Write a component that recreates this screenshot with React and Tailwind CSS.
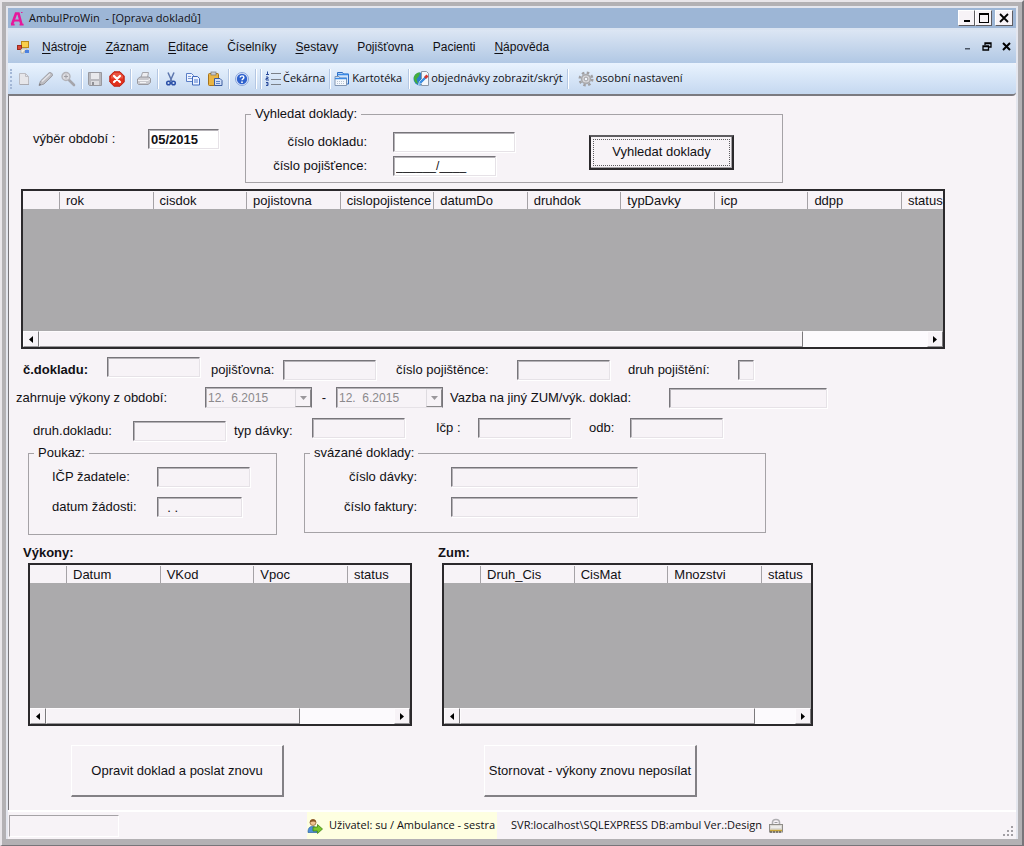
import { useState } from 'react';

const menuItems = [
  { key: 'N', rest: 'ástroje' },
  { key: 'Z', rest: 'áznam' },
  { key: 'E', rest: 'ditace' },
  { key: '', rest: 'Číselníky' },
  { key: 'S', rest: 'estavy' },
  { key: '', rest: 'Pojišťovna' },
  { key: '', rest: 'Pacienti' },
  { key: 'N', rest: 'ápověda' },
];

/* ---------- ICONS ---------- */

function LogoIcon() {
  return (
    <svg width="15" height="15" viewBox="0 0 15 15" fill="none" stroke="#e6179b">
      <path d="M2 13.5 6 2.5h2.5l3 11" strokeWidth="2.6" />
      <path d="M4 9.5h6" strokeWidth="2" />
      <path d="M1 13.6h3.6M9.6 13.6h4" strokeWidth="1.8" />
      <path d="M11 1.5h1.5" strokeWidth="1" />
    </svg>
  );
}

function FormIcon() {
  return (
    <svg width="14" height="14" viewBox="0 0 14 14">
      <rect x="5.5" y="1.5" width="7" height="6" fill="#f9cf4a" stroke="#b98a1b" />
      <rect x="1.5" y="5.5" width="4" height="4" fill="#d8483a" stroke="#9c2a1f" />
      <path d="M5 9h6v2H8v2H5z" fill="#f3efe4" stroke="#a89f8c" strokeWidth=".6" />
      <rect x="9" y="10" width="4" height="3" fill="#4a80e0" />
    </svg>
  );
}

function NewIcon() {
  return (
    <svg width="16" height="16" viewBox="0 0 16 16">
      <path d="M3.5 2.5h6l3 3v8h-9z" fill="#e6e6ea" stroke="#bcbcc2" />
      <path d="M9.5 2.5v3h3" fill="none" stroke="#bcbcc2" />
      <path d="M4 13.5h9" stroke="#a9a9b0" />
    </svg>
  );
}

function PenIcon() {
  return (
    <svg width="16" height="16" viewBox="0 0 16 16">
      <path d="M1 14.5 2.5 10 11 1.8c1.5-1 4.300 1 3.300 3L6 13z" fill="#bdbdc2" stroke="#9b9ba1" />
      <path d="M4 10.5 12 3" stroke="#e4e4e8" strokeWidth="1.5" />
      <path d="m1 14.5.8-2 1.300 1.300z" fill="#6d6d73" />
    </svg>
  );
}

function FindIcon() {
  return (
    <svg width="16" height="16" viewBox="0 0 16 16">
      <path d="m9 9 5 5" stroke="#a5a5ab" strokeWidth="2.6" strokeLinecap="round" />
      <circle cx="6" cy="5.5" r="4" fill="#dcdce1" stroke="#b3b3b9" strokeWidth="1.4" />
      <path d="M4 5.5h4M6 3.5v4" stroke="#a0a0a6" />
    </svg>
  );
}

function SaveIcon() {
  return (
    <svg width="16" height="16" viewBox="0 0 16 16">
      <path d="M1.5 1.5h13v13h-12l-1-1z" fill="#b9b9be" stroke="#98989e" />
      <rect x="4" y="2" width="8" height="6" fill="#e9e9ec" />
      <rect x="4" y="10" width="8" height="4" fill="#dcdce0" />
      <rect x="5" y="11" width="2" height="3" fill="#8f8f95" />
    </svg>
  );
}

function CancelIcon() {
  return (
    <svg width="16" height="16" viewBox="0 0 16 16">
      <path d="M5 .8h6L15.2 5v6L11 15.2H5L.8 11V5z" fill="#e2301c" stroke="#b81f10" />
      <path d="M5.3 1.7h5.4L14 5v2.5H2V5z" fill="#f0705c" opacity=".6" />
      <path d="m5 5 6 6m0-6-6 6" stroke="#fff" strokeWidth="2.2" strokeLinecap="round" />
    </svg>
  );
}

function PrintIcon() {
  return (
    <svg width="16" height="16" viewBox="0 0 16 16">
      <path d="M5 6.5 6.5 1.5h6L11.5 6.5z" fill="#ededf0" stroke="#a5a5ab" />
      <path d="M1.5 8 4 6h9l1.5 1.5v4L12 13.5H2.5l-1-1z" fill="#c9c9ce" stroke="#9a9aa0" />
      <path d="M2 9.5h10l2-1.5M4 11.5h6" stroke="#f3f3f5" fill="none" />
    </svg>
  );
}

function CutIcon() {
  return (
    <svg width="16" height="16" viewBox="0 0 16 16" fill="none">
      <path d="m5 1.5 4 9M11 1.5l-4 9" stroke="#5c76ad" strokeWidth="1.5" />
      <circle cx="5.5" cy="12" r="1.8" stroke="#2b50a8" strokeWidth="1.5" />
      <circle cx="10.5" cy="12" r="1.8" stroke="#2b50a8" strokeWidth="1.5" />
    </svg>
  );
}

function CopyIcon() {
  return (
    <svg width="16" height="16" viewBox="0 0 16 16">
      <path d="M1.5 2.5h5l2 2v6h-7z" fill="#eef4ff" stroke="#5b7fc7" />
      <path d="M3 5.5h3M3 7.5h4" stroke="#7f9cd6" />
      <path d="M7.5 5.5h5l2 2v6.5h-7z" fill="#eef4ff" stroke="#3f68ba" />
      <path d="M9 9h4M9 11h4" stroke="#4c79cf" />
    </svg>
  );
}

function PasteIcon() {
  return (
    <svg width="16" height="16" viewBox="0 0 16 16">
      <rect x="1.5" y="2.5" width="10" height="12" rx="1" fill="#eab544" stroke="#a8731a" />
      <rect x="4" y="1" width="5" height="3" fill="#c8cbd2" stroke="#777" strokeWidth=".7" />
      <path d="M7.5 7.5h5.500l2 2v5h-7.500z" fill="#cfdef8" stroke="#3c5d9e" />
      <path d="M9 10.5h4M9 12.5h4" stroke="#5d84c9" />
    </svg>
  );
}

function HelpIcon() {
  return (
    <svg width="16" height="16" viewBox="0 0 16 16">
      <circle cx="8" cy="8" r="6.5" fill="#dfe8fa" stroke="#8aa5da" />
      <circle cx="8" cy="8" r="5.2" fill="#2f62cd" />
      <path d="M6.2 6.6c0-2.300 3.700-2.200 3.700 0C9.900 7.900 8 7.800 8 9.300" fill="none" stroke="#fff" strokeWidth="1.4" />
      <circle cx="8" cy="11.2" r=".9" fill="#fff" />
    </svg>
  );
}

function ListIcon() {
  return (
    <svg width="16" height="16" viewBox="0 0 16 16" fill="none">
      <path d="M2.5 .5v3M1 3.5h3M1 6h2v1.500H1V9h3M1 11.5h2v3H1M1.5 13h1.500" stroke="#2b4a9a" />
      <path d="M6 2.5h10M6 8.5h10M6 13.5h10" stroke="#7b8088" />
    </svg>
  );
}

function FoldersIcon() {
  return (
    <svg width="16" height="16" viewBox="0 0 16 16">
      <path d="M3.5 5.5v-4h5l1 1.500h5v10h-3" fill="#cfe3fb" stroke="#2f6cc0" />
      <path d="M1 14.5v-9h4l1 1.500h6.500v7.500z" fill="#f4f8fd" stroke="#8296b2" />
      <path d="M1 7.500h12M3.500 3.500h11" stroke="#3b8ae6" strokeWidth="1.5" />
      <path d="M3 10.5h8M3 12.5h8" stroke="#b9c4d2" strokeDasharray="1 1" />
    </svg>
  );
}

function OrdersIcon() {
  return (
    <svg width="16" height="16" viewBox="0 0 16 16">
      <circle cx="7" cy="8" r="6.5" fill="#2a7fc9" />
      <path d="M1 6c1-3.500 4-5 6-4.500L6 5 3.500 8 5 13C2 12 .5 9 1 6z" fill="#43ad3c" />
      <path d="M8.5.5h5l2 2v12h-7z" fill="#f4f7fb" stroke="#8b98a8" />
      <path d="m5.5 13.5 1-3L13 4l2 2-6.500 6.500z" fill="#3f8fe0" stroke="#f4f7fb" strokeWidth=".7" />
      <path d="m11 6 2.500-2.500 2 2L13 8z" fill="#d9342b" />
    </svg>
  );
}

function GearIcon() {
  return (
    <svg width="16" height="16" viewBox="0 0 16 16" fill="none">
      <circle cx="8" cy="8" r="6.3" stroke="#a09fa2" strokeWidth="2.4" strokeDasharray="2.5 2.45" />
      <circle cx="8" cy="8" r="4.4" fill="#d9d9dc" stroke="#aaaaad" strokeWidth="1.6" />
      <circle cx="8" cy="8" r="1.9" fill="#f1f5fb" stroke="#a0a0a4" />
    </svg>
  );
}

function UserIcon() {
  return (
    <svg width="16" height="16" viewBox="0 0 16 16">
      <path d="M1 14.5c0-5 2-6 4.500-6s4.500 1 4.500 6z" fill="#4f8fd8" stroke="#2d62a5" strokeWidth=".7" />
      <circle cx="6" cy="4.5" r="3" fill="#f1c493" stroke="#8a5a26" strokeWidth=".7" />
      <path d="M2.8 4.5C2.8 0 9.2 0 9.2 4.5 7.5 3 5 3 2.8 4.5z" fill="#8a5523" />
      <path d="M6 9h4.500V6.500L15.500 11l-5 4.500V13H6z" fill="#7ac62c" stroke="#3f8413" strokeWidth=".8" />
    </svg>
  );
}

function LockIcon() {
  return (
    <svg width="16" height="16" viewBox="0 0 16 16">
      <path d="M4.500 7V4.500c0-4 7-4 7 0V7" fill="none" stroke="#b0afb2" strokeWidth="1.6" />
      <path d="M6.500 4.500h3" stroke="#9d9da0" />
      <rect x="1.5" y="6.5" width="13" height="7.5" fill="#dcdad6" stroke="#8f8d88" />
      <path d="M3 9h10" stroke="#fff" />
      <path d="M2 12.5h12" stroke="#c9a63a" strokeWidth="1.5" />
      <path d="M2 14h12" stroke="#3f3b33" strokeDasharray="2 1" />
    </svg>
  );
}

/* ---------- SMALL PARTS ---------- */

function Separator() {
  return <div className="mx-[2px] h-5 w-px shrink-0 bg-[#b4c7e3] shadow-[1px_0_0_#ffffff]" />;
}

function ToolButton({ label, children }) {
  return (
    <button aria-label={label} className="flex h-6 w-[22px] shrink-0 items-center justify-center">
      {children}
    </button>
  );
}

function TextToolButton({ text, className = '', children }) {
  return (
    <button className={`flex h-6 shrink-0 items-center gap-[2px] whitespace-nowrap px-[2px] ${className}`}>
      {children}
      {text}
    </button>
  );
}

function TextBox({ id, className, disabled = true, value = '' }) {
  const [text, setText] = useState(value);
  const background = disabled ? 'bg-[#f7f3f7]' : 'bg-white';
  return (
    <input
      id={id}
      type="text"
      value={text}
      disabled={disabled}
      onChange={(e) => setText(e.target.value)}
      className={`h-5 shrink-0 rounded-none border border-t-[#77757a] border-r-[#e6e2e7] border-b-[#e6e2e7] border-l-[#77757a] px-[2px] leading-4 shadow-[inset_1px_1px_0_#b5b2b7,1px_1px_0_#ffffff] outline-none ${background} ${className}`}
    />
  );
}

function Label({ htmlFor, className = '', children }) {
  return (
    <label htmlFor={htmlFor} className={`shrink-0 whitespace-nowrap leading-5 ${className}`}>
      {children}
    </label>
  );
}

function DateBox({ id, label }) {
  return (
    <div className="relative w-[107px] shrink-0">
      <select
        id={id}
        aria-label={label}
        disabled
        className="block h-[21px] w-full appearance-none rounded-none border border-t-[#77757a] border-r-[#77757a] border-b-[#e6e2e7] border-l-[#77757a] bg-[#f7f3f7] px-[2px] text-xs text-[#8b898c] opacity-100 shadow-[inset_1px_1px_0_#b5b2b7]"
      >
        <option>{'12.\u00a0\u00a06.2015'}</option>
      </select>
      <span className="pointer-events-none absolute top-[2px] right-[1px] bottom-px flex w-4 items-center justify-center border border-t-[#f0edf1] border-r-[#8a888b] border-b-[#8a888b] border-l-[#dedbe0] bg-[#f7f3f7]">
        <svg width="7" height="4" viewBox="0 0 7 4" fill="#9a979b"><path d="M0 0h7L3.500 4z" /></svg>
      </span>
    </div>
  );
}

function GroupBox({ title, className, children }) {
  return (
    <fieldset className={`shrink-0 border border-[#a5a2a6] ${className}`}>
      <legend className="ml-[5px] px-1 leading-4">{title}</legend>
      {children}
    </fieldset>
  );
}

function ScrollBar({ thumb }) {
  const arrow = 'flex w-4 shrink-0 items-center justify-center border border-t-[#fdfbfd] border-r-[#7b797c] border-b-[#9a989b] border-l-[#fdfbfd] bg-[#f7f3f7]';
  return (
    <div className="flex h-4 bg-[#fcfafd]">
      <button aria-label="Posunout vlevo" className={arrow}>
        <svg width="4" height="7" viewBox="0 0 4 7"><path d="M4 0v7L0 3.500z" /></svg>
      </button>
      <div className="grow">
        <div className={`h-4 border border-t-[#fdfbfd] border-r-[#7b797c] border-b-[#9a989b] border-l-[#fdfbfd] bg-[#f7f3f7] ${thumb}`} />
      </div>
      <button aria-label="Posunout vpravo" className={arrow}>
        <svg width="4" height="7" viewBox="0 0 4 7"><path d="M0 0v7l4-3.500z" /></svg>
      </button>
    </div>
  );
}

function DataGrid({ columns, lastWidth, thumb, bodyHeight, className }) {
  return (
    <div className={`border-2 border-[#2b292c] bg-[#abaaac] ${className}`}>
      <table className="w-full table-fixed border-collapse bg-[#f7f3f7] text-left">
        <thead>
          <tr className="h-[18px]">
            <th className="w-9" aria-label="Řádek" />
            {columns.map((column, i) => (
              <th key={column} className={`p-0 align-bottom font-normal ${i === columns.length - 1 ? lastWidth : ''}`}>
                <span className="block whitespace-nowrap border-l border-[#a5a2a6] pt-px pl-[6px] leading-4">{column}</span>
              </th>
            ))}
          </tr>
        </thead>
      </table>
      <div className={bodyHeight} />
      <ScrollBar thumb={thumb} />
    </div>
  );
}

function ActionButton({ children }) {
  return (
    <button className="h-[52px] w-[213px] shrink-0 border-t border-r-2 border-b-2 border-l border-t-white border-r-[#838085] border-b-[#838085] border-l-white">
      {children}
    </button>
  );
}

/* ---------- WINDOW BARS ---------- */

function TitleBar() {
  const box = 'flex h-4 items-center justify-center border border-t-white border-r-[#5e5c60] border-b-[#5e5c60] border-l-white bg-[#f7f3f7]';
  return (
    <header className="flex h-5 items-center bg-[#9db6d6] pr-[3px] pl-[2px] font-['Open_Sans',sans-serif] text-[11px]">
      <LogoIcon />
      <h1 className="ml-1 grow whitespace-pre">AmbulProWin  - [Oprava dokladů]</h1>
      <button aria-label="Minimalizovat" className={`${box} w-[17px]`}>
        <svg width="10" height="10" viewBox="0 0 10 10"><path d="M2 7h6v2H2z" /></svg>
      </button>
      <button aria-label="Maximalizovat" className={`${box} mr-[3px] w-[17px]`}>
        <svg width="10" height="10" viewBox="0 0 10 10"><path d="M0 0h10v10H0zM1 2v7h8V2z" fillRule="evenodd" /></svg>
      </button>
      <button aria-label="Zavřít" className={`${box} w-[18px]`}>
        <svg width="10" height="10" viewBox="0 0 10 10" stroke="#000" strokeWidth="1.8"><path d="m1 1 8 8M9 1 1 9" /></svg>
      </button>
    </header>
  );
}

function MenuBar() {
  return (
    <nav className="flex h-[33px] items-center bg-linear-to-b from-[#dce6f4] to-[#b1c8e4] pr-[5px] pl-2 text-xs">
      <FormIcon />
      <div className="ml-3 flex grow gap-[19px]">
        {menuItems.map((item) => (
          <button key={item.key + item.rest} className="whitespace-nowrap">
            <span className="underline underline-offset-2">{item.key}</span>
            {item.rest}
          </button>
        ))}
      </div>
      <div className="flex items-center gap-[10px]">
        <button aria-label="Minimalizovat okno">
          <svg width="9" height="9" viewBox="0 0 9 9"><path d="M2 6h5v1.500H2z" fill="#4a5564" /></svg>
        </button>
        <button aria-label="Obnovit okno">
          <svg width="10" height="9" viewBox="0 0 10 9" fill="none" stroke="#000"><path d="M3 3V1h6v4H7M3 1.500h6M1 4h5.500v4H1zM1 4.500h5" strokeWidth="1.3" /></svg>
        </button>
        <button aria-label="Zavřít okno">
          <svg width="9" height="9" viewBox="0 0 9 9" stroke="#000" strokeWidth="2"><path d="m1 1 7 7M8 1 1 8" /></svg>
        </button>
      </div>
    </nav>
  );
}

function ToolBar() {
  return (
    <div role="toolbar" className="flex h-[33px] items-center rounded-r-sm border-b-2 border-[#7b7a80] bg-linear-to-b from-[#e9f3fe] to-[#c5d8f0] pl-[2px] font-['Open_Sans',sans-serif] text-[11px]">
      <div className="mr-px h-5 w-[2px] border-l-2 border-dotted border-[#a3b7d6]" />
      <ToolButton label="Nový"><NewIcon /></ToolButton>
      <ToolButton label="Upravit"><PenIcon /></ToolButton>
      <ToolButton label="Hledat"><FindIcon /></ToolButton>
      <Separator />
      <ToolButton label="Uložit"><SaveIcon /></ToolButton>
      <ToolButton label="Zrušit"><CancelIcon /></ToolButton>
      <Separator />
      <ToolButton label="Tisk"><PrintIcon /></ToolButton>
      <Separator />
      <ToolButton label="Vyjmout"><CutIcon /></ToolButton>
      <ToolButton label="Kopírovat"><CopyIcon /></ToolButton>
      <ToolButton label="Vložit"><PasteIcon /></ToolButton>
      <Separator />
      <ToolButton label="Nápověda"><HelpIcon /></ToolButton>
      <Separator />
      <Separator />
      <TextToolButton text="Čekárna"><ListIcon /></TextToolButton>
      <Separator />
      <TextToolButton text="Kartotéka" className="mr-[2px]"><FoldersIcon /></TextToolButton>
      <Separator />
      <TextToolButton text="objednávky zobrazit/skrýt"><OrdersIcon /></TextToolButton>
      <Separator />
      <TextToolButton text="osobní nastavení" className="ml-[6px]"><GearIcon /></TextToolButton>
    </div>
  );
}

function StatusBar() {
  return (
    <footer className="flex h-[29px] items-center border-t-2 border-white bg-[#f7f3f7] font-['Open_Sans',sans-serif] text-[11px]">
      <div className="ml-px h-[22px] w-[110px] border border-t-[#a5a2a6] border-r-white border-b-white border-l-[#a5a2a6]" />
      <div className="ml-[188px] flex h-full items-center gap-[6px] bg-[#feffe1] pr-[2px] whitespace-nowrap">
        <UserIcon />
        Uživatel: su / Ambulance - sestra
      </div>
      <span className="mr-[6px] ml-[14px] whitespace-nowrap">SVR:localhost\SQLEXPRESS DB:ambul Ver.:Design</span>
      <LockIcon />
      <svg className="mr-[2px] mb-[2px] ml-auto self-end" width="11" height="11" viewBox="0 0 11 11" fill="#a29fa4">
        <path d="M8 0h2v2H8zM4 4h2v2H4zM8 4h2v2H8zM0 8h2v2H0zM4 8h2v2H4zM8 8h2v2H8z" />
      </svg>
    </footer>
  );
}

/* ---------- PAGE ---------- */

export default function App() {
  return (
    <div className="flex min-h-screen flex-col border-t-2 border-r-2 border-b border-l-2 border-t-[#e9e6ea] border-r-[#77757a] border-b-[#77757a] border-l-[#e9e6ea] bg-[#b3b1b4] pt-1 pr-1 pb-[6px] pl-1 font-['Liberation_Sans',Arial,sans-serif] text-[13px] text-[#111014]">
      <div className="flex grow flex-col border-2 border-b-0 border-[#e4e6ee] bg-[#f7f3f7]">
        <TitleBar />
        <div className="h-[2px] bg-[#d9e3f1]" />
        <MenuBar />
        <ToolBar />

        <main className="flex grow flex-col overflow-hidden border-l border-[#77757a]">
          {/* SEARCH */}
          <div className="flex items-start pt-[10px]">
            <div className="flex w-[236px] shrink-0 items-center pt-[23px] pl-6">
              <Label htmlFor="obdobi" className="w-[115px]">výběr období :</Label>
              <TextBox id="obdobi" value="05/2015" disabled={false} className="w-[71px] font-bold" />
            </div>
            <GroupBox title="Vyhledat doklady:" className="w-[538px]">
              <div className="flex items-center pt-[10px] pb-[6px]">
                <div className="flex w-[343px] flex-col gap-1">
                  <div className="flex items-center">
                    <Label htmlFor="cislo-dokladu" className="mr-[26px] w-[121px] text-right">číslo dokladu:</Label>
                    <TextBox id="cislo-dokladu" disabled={false} className="w-[122px]" />
                  </div>
                  <div className="flex items-center">
                    <Label htmlFor="cislo-pojistence" className="mr-[26px] w-[121px] text-right">číslo pojišťence:</Label>
                    <TextBox id="cislo-pojistence" value="______/____" disabled={false} className="w-[103px] text-xs" />
                  </div>
                </div>
                <button className="mb-1 h-[35px] w-[145px] border-2 border-t-[#5e5c60] border-r-[#2b292c] border-b-[#2b292c] border-l-[#2b292c] p-[2px] shadow-[inset_-1px_-1px_0_#a5a2a6]">
                  <span className="flex h-full items-center justify-center border border-dotted border-[#5e5c60]">Vyhledat doklady</span>
                </button>
              </div>
            </GroupBox>
          </div>

          <DataGrid
            columns={['rok', 'cisdok', 'pojistovna', 'cislopojistence', 'datumDo', 'druhdok', 'typDavky', 'icp', 'ddpp', 'status']}
            lastWidth="w-[42px]"
            thumb="w-[86%]"
            bodyHeight="h-[122px]"
            className="mt-[6px] mr-[71px] ml-3"
          />

          {/* DOCUMENT DETAIL */}
          <div className="mt-2 flex h-[23px] items-end pl-[14px]">
            <Label htmlFor="doklad" className="w-[84px] font-bold">č.dokladu:</Label>
            <TextBox id="doklad" className="w-[93px] self-start" />
            <Label htmlFor="pojistovna" className="ml-[11px] w-[72px]">pojišťovna:</Label>
            <TextBox id="pojistovna" className="w-[93px]" />
            <Label htmlFor="pojistenec" className="ml-5 w-[121px]">číslo pojištěnce:</Label>
            <TextBox id="pojistenec" className="w-[93px]" />
            <Label htmlFor="druh-pojisteni" className="ml-[18px] w-[110px]">druh pojištění:</Label>
            <TextBox id="druh-pojisteni" className="w-4" />
          </div>
          <div className="mt-[7px] flex items-center pl-[7px]">
            <Label htmlFor="datum-od" className="w-[189px]">zahrnuje výkony z období:</Label>
            <DateBox id="datum-od" label="Období od" />
            <span className="w-6 text-center">-</span>
            <DateBox id="datum-do" label="Období do" />
            <Label htmlFor="vazba" className="ml-[7px] w-[219px]">Vazba na jiný ZUM/výk. doklad:</Label>
            <TextBox id="vazba" className="w-[158px]" />
          </div>
          <div className="mt-[10px] flex h-[23px] items-start pl-6">
            <Label htmlFor="druh-dokladu" className="w-[100px] self-end">druh.dokladu:</Label>
            <TextBox id="druh-dokladu" className="w-[93px] self-end" />
            <Label htmlFor="typ-davky" className="ml-2 w-[78px] self-end">typ dávky:</Label>
            <TextBox id="typ-davky" className="w-[93px]" />
            <Label htmlFor="icp" className="ml-[31px] w-[42px]">Ičp :</Label>
            <TextBox id="icp" className="w-[93px]" />
            <Label htmlFor="odb" className="ml-[18px] w-[41px]">odb:</Label>
            <TextBox id="odb" className="w-[93px]" />
          </div>

          <div className="mt-1 flex items-start gap-[27px] pl-[19px]">
            <GroupBox title="Poukaz:" className="w-[249px]">
              <div className="flex h-[73px] flex-col gap-[10px] pt-[6px] pl-[23px]">
                <div className="flex items-center">
                  <Label htmlFor="zadatel" className="w-[105px]">IČP žadatele:</Label>
                  <TextBox id="zadatel" className="w-[93px]" />
                </div>
                <div className="flex items-center">
                  <Label htmlFor="datum-zadosti" className="w-[105px]">datum žádosti:</Label>
                  <TextBox id="datum-zadosti" value="  . ." className="w-[85px]" />
                </div>
              </div>
            </GroupBox>
            <GroupBox title="svázané doklady:" className="w-[462px]">
              <div className="flex h-[71px] flex-col gap-[10px] pt-[6px]">
                <div className="flex items-center">
                  <Label htmlFor="davka" className="mr-[34px] w-[112px] text-right">číslo dávky:</Label>
                  <TextBox id="davka" className="w-[187px]" />
                </div>
                <div className="flex items-center">
                  <Label htmlFor="faktura" className="mr-[34px] w-[112px] text-right">číslo faktury:</Label>
                  <TextBox id="faktura" className="w-[187px]" />
                </div>
              </div>
            </GroupBox>
          </div>

          {/* VYKONY, ZUM */}
          <div className="mt-2 flex items-start gap-[26px] pl-[14px]">
            <section className="w-[389px] shrink-0">
              <h2 className="font-bold leading-5">Výkony:</h2>
              <DataGrid
                columns={['Datum', 'VKod', 'Vpoc', 'status']}
                lastWidth="w-[63px]"
                thumb="w-[73%]"
                bodyHeight="h-[125px]"
                className="ml-[5px]"
              />
              <div className="mt-[19px] ml-12 flex">
                <ActionButton>Opravit doklad a poslat znovu</ActionButton>
              </div>
            </section>
            <section className="w-[375px] shrink-0">
              <h2 className="font-bold leading-5">Zum:</h2>
              <DataGrid
                columns={['Druh_Cis', 'CisMat', 'Mnozstvi', 'status']}
                lastWidth="w-[50px]"
                thumb="w-[88%]"
                bodyHeight="h-[125px]"
                className="ml-1"
              />
              <div className="mt-[19px] ml-[46px] flex">
                <ActionButton>Stornovat - výkony znovu neposílat</ActionButton>
              </div>
            </section>
          </div>
        </main>

        <StatusBar />
      </div>
    </div>
  );
}
